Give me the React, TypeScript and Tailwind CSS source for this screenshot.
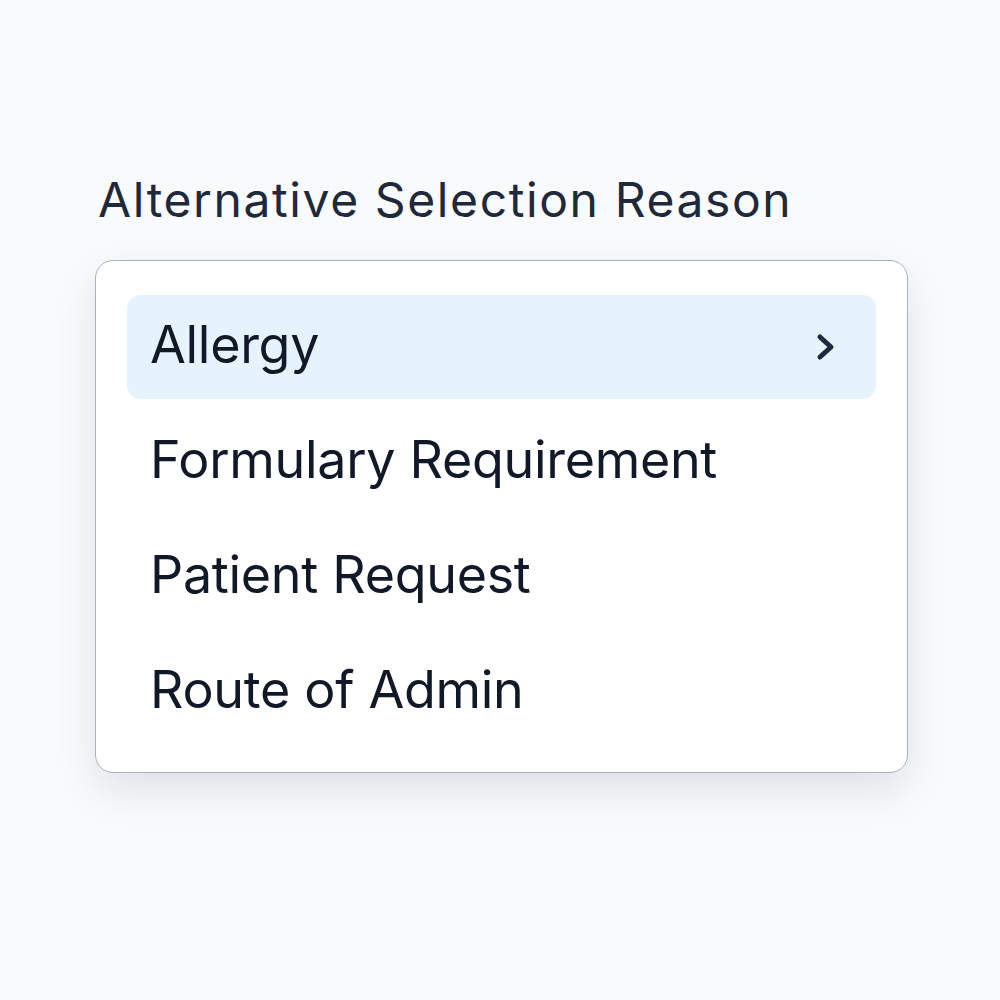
import React from "react";

const items = ["Allergy", "Formulary Requirement", "Patient Request", "Route of Admin"];

export default function App() {
  return (
    <div
      className="w-[1000px] h-[1000px] bg-[#f8fafc] flex flex-col pl-[95px] pt-[170px]"
      style={{ fontFamily: "Inter, 'Noto Sans', sans-serif" }}
    >
      <div className="text-[48px] leading-[60px] text-[#1e293b] pl-[3px] tracking-[1.6px]">
        Alternative Selection Reason
      </div>
      <div className="mt-[30px] w-[813px] rounded-[18px] border border-[#a3b2c4] bg-white shadow-[0_18px_40px_rgba(15,23,42,0.10)] pt-[34px] pb-[28px] px-[31px] flex flex-col gap-[11px]">
        {items.map((t, i) => (
          <div
            key={t}
            className={
              "h-[104px] rounded-[14px] flex items-center justify-between pl-[23px] pr-[38px] " +
              (i === 0 ? "bg-[#e6f3fd]" : "")
            }
          >
            <span className="text-[52px] text-[#111827] tracking-[-0.3px] -mt-[4px]">{t}</span>
            {i === 0 && (
              <svg width="24" height="30" viewBox="0 0 24 30" fill="none">
                <path d="M6 5 L17 15 L6 25" stroke="#1e293b" strokeWidth="5" strokeLinecap="round" strokeLinejoin="round" />
              </svg>
            )}
          </div>
        ))}
      </div>
    </div>
  );
}
